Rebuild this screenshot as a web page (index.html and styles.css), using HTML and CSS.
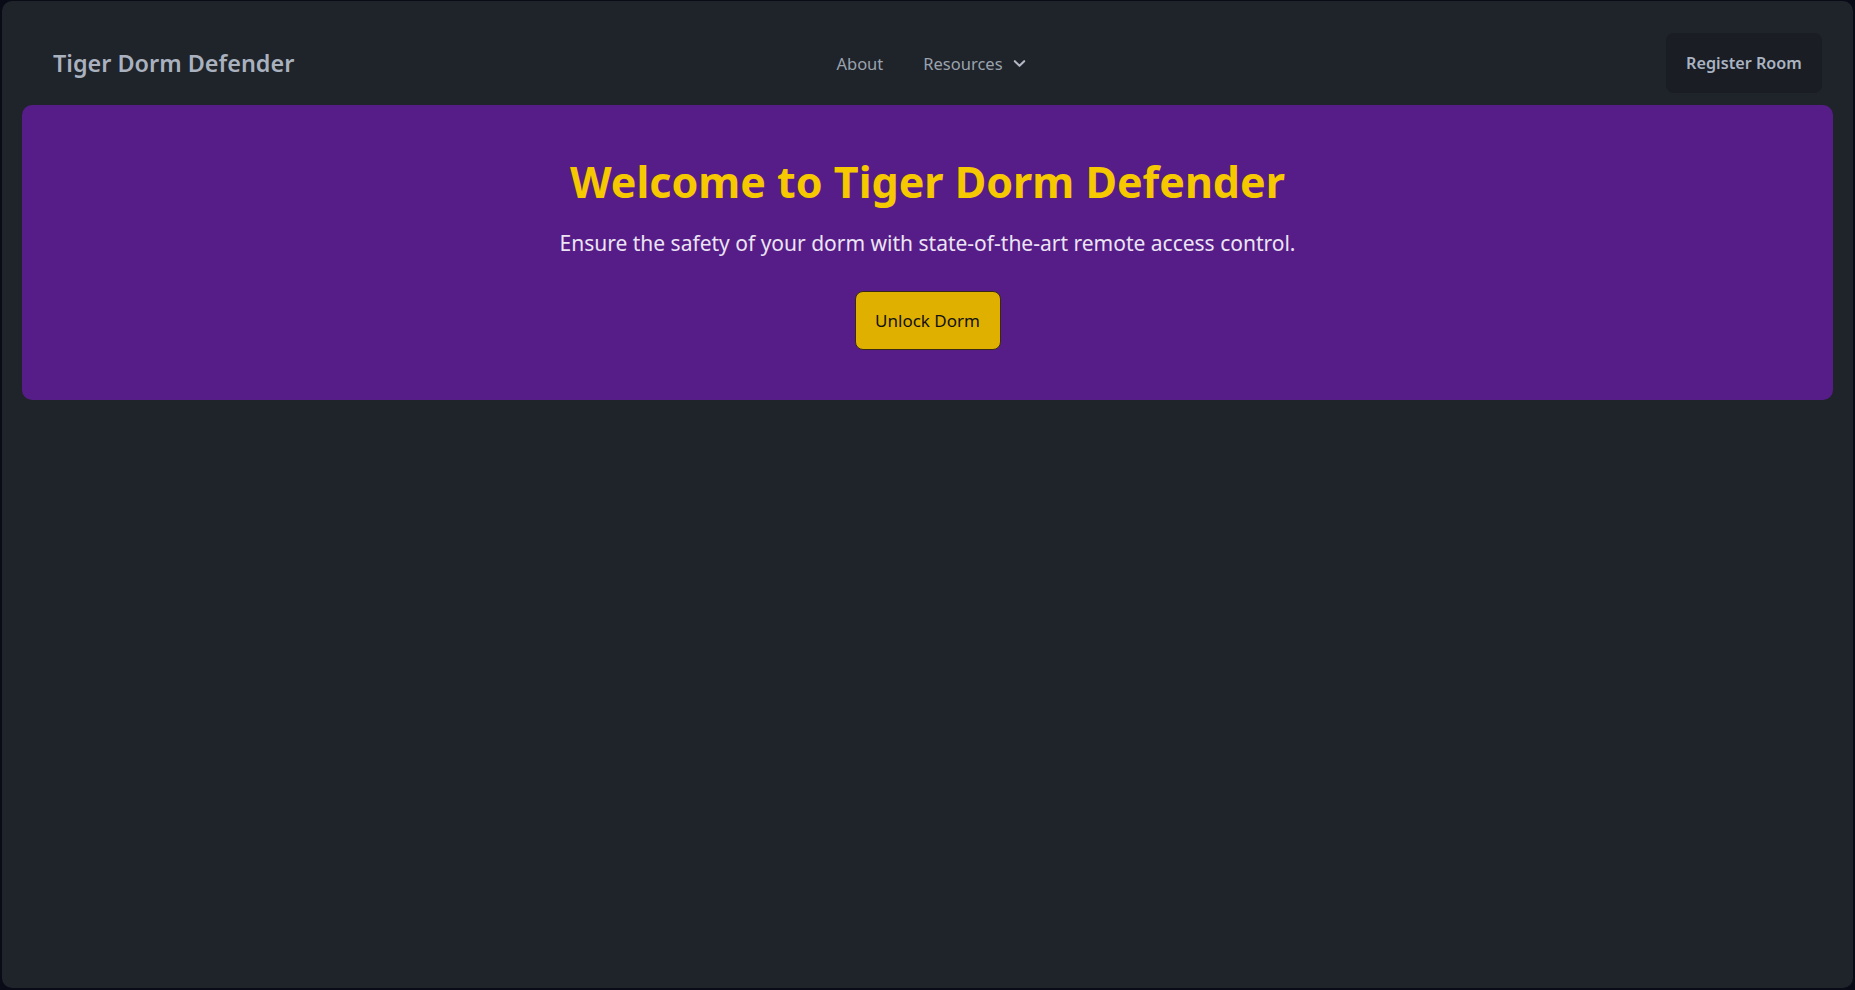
FILE: index.html
```html
<!DOCTYPE html>
<html lang="en">
<head>
<meta charset="utf-8">
<title>Tiger Dorm Defender</title>
<link rel="stylesheet" href="styles.css">
</head>
<body>
<div class="app">
  <header class="navbar">
    <div class="brand">Tiger Dorm Defender</div>
    <nav class="nav-links">
      <a class="nav-link" href="#">About</a>
      <a class="nav-link dropdown" href="#">Resources
        <svg class="chevron" viewBox="0 0 16 16" width="15" height="15" aria-hidden="true"><path d="M3 5.5 L8 10.5 L13 5.5" fill="none" stroke="currentColor" stroke-width="2.2" stroke-linecap="round" stroke-linejoin="round"/></svg>
      </a>
    </nav>
    <div class="nav-actions">
      <button class="register-btn">Register Room</button>
    </div>
  </header>
  <section class="hero">
    <h1 class="hero-title">Welcome to Tiger Dorm Defender</h1>
    <p class="hero-sub">Ensure the safety of your dorm with state-of-the-art remote access control.</p>
    <button class="unlock-btn">Unlock Dorm</button>
  </section>
</div>
</body>
</html>
```

FILE: styles.css
```css
* { box-sizing: border-box; }
html, body { height: 100%; }
body {
  margin: 0;
  background: #090c16;
  font-family: "Noto Sans", "Open Sans", sans-serif;
  padding: 1px 2px 2px 2px;
}
.app {
  height: 100%;
  background: #1f232a;
  border-radius: 10px;
  padding: 0 20px;
}
.navbar {
  display: grid;
  grid-template-columns: 1fr auto 1fr;
  align-items: center;
  padding: 32px 11px 12px 31px;
}
.brand {
  color: #a9b1bf;
  font-size: 23.4px;
  font-weight: 600;
}
.nav-links {
  display: flex;
  align-items: center;
  gap: 40px;
  padding-right: 12px;
}
.nav-link {
  color: #9aa2ae;
  text-decoration: none;
  font-size: 16.5px;
  display: flex;
  align-items: center;
  gap: 9px;
}
.chevron { color: #b3b9c4; margin-top: 1px; }
.nav-actions { display: flex; justify-content: flex-end; }
.register-btn {
  background: #1a1d23;
  color: #a9b3c2;
  border: none;
  border-radius: 8px;
  height: 60px;
  width: 156px;
  font-family: inherit;
  font-size: 16.2px;
  font-weight: 600;
}
.hero {
  background: #561d88;
  border-radius: 10px;
  padding: 48px 20px 50px;
  display: flex;
  flex-direction: column;
  align-items: center;
}
.hero-title {
  margin: 0;
  color: #f5c800;
  font-size: 43px;
  font-weight: 700;
  line-height: 58px;
}
.hero-sub {
  margin: 17px 0 0;
  color: #ece4f4;
  font-size: 21px;
  line-height: 30px;
}
.unlock-btn {
  margin-top: 33px;
  background: #e0b000;
  color: #111;
  border: 1px solid #3a2a15;
  border-radius: 8px;
  width: 146px;
  height: 59px;
  font-family: inherit;
  font-size: 17px;
}
```
